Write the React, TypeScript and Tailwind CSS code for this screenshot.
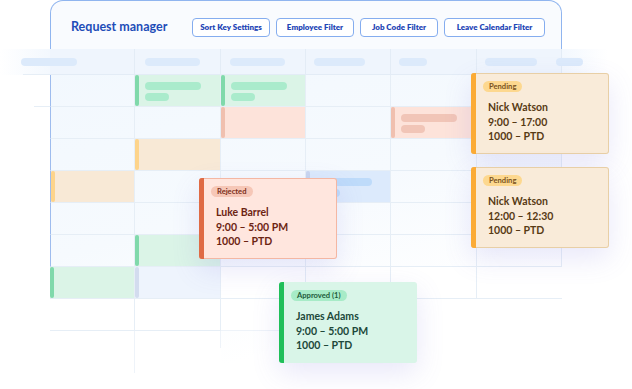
import React from "react";

type Tone = "green" | "salmon" | "beige" | "blue" | "mist";

const tones: Record<Tone, { bg: string; bar: string; pill: string }> = {
  green: { bg: "bg-[#dbf4e7]", bar: "bg-[#80d9ab]", pill: "bg-[#aaebcc]" },
  salmon: { bg: "bg-[#fde3da]", bar: "bg-[#f0c0af]", pill: "bg-[#f1c5b7]" },
  beige: { bg: "bg-[#f8e9d6]", bar: "bg-[#fdd48b]", pill: "" },
  blue: { bg: "bg-[#dceafc]", bar: "bg-[#c9d6ef]", pill: "bg-[#bedbfa]" },
  mist: { bg: "bg-[#eef4fd]", bar: "bg-[#d3dcef]", pill: "" },
};

// row-col of the coloured slots in the schedule
const slots: Record<string, { tone: Tone; pills?: boolean }> = {
  "0-1": { tone: "green", pills: true },
  "0-2": { tone: "green", pills: true },
  "1-2": { tone: "salmon" },
  "1-4": { tone: "salmon", pills: true },
  "2-1": { tone: "beige" },
  "3-0": { tone: "beige" },
  "3-3": { tone: "blue", pills: true },
  "5-1": { tone: "green" },
  "6-0": { tone: "green" },
  "6-1": { tone: "mist" },
};

const buttons = [
  "Sort Key Settings",
  "Employee Filter",
  "Job Code Filter",
  "Leave Calendar Filter",
];

function cellBorders(row: number, col: number) {
  if (row < 6) {
    return col === 0
      ? "border-b border-r border-l border-b-[#e6eef6] border-r-[#e6eef6] border-l-[#9ebcee]"
      : "border-b border-r border-[#e6eef6]";
  }
  if (row === 6) {
    return col < 5 ? "border-b border-r border-[#e6eef6]" : "border-b border-[#e6eef6]";
  }
  if (col < 2) return "border-b border-r border-[#e6eef6]";
  if (col === 2) return "border-b border-[#eef3f9]";
  return "";
}

function Slot({ tone, pills }: { tone: Tone; pills?: boolean }) {
  const t = tones[tone];
  return (
    <div className={`flex h-full w-full ${t.bg}`}>
      <div className={`w-[4px] h-full rounded-full ${t.bar}`} />
      {pills && (
        <div className="flex flex-col gap-[3px] pl-[6px] pt-[7px]">
          <div className={`h-[8px] w-[56px] rounded-full ${t.pill}`} />
          <div className={`h-[8px] w-[24px] rounded-full ${t.pill}`} />
        </div>
      )}
    </div>
  );
}

type Kind = "pending" | "rejected" | "approved";

const cardTheme: Record<Kind, { card: string; bar: string; badge: string; text: string }> = {
  pending: {
    card: "bg-[#f9ebd9] border-[#e8cfa6]",
    bar: "bg-[#fbab36]",
    badge: "bg-[#fdd88f] text-[#7a5320]",
    text: "text-[#573a14]",
  },
  rejected: {
    card: "bg-[#ffe6de] border-[#f4b7a3]",
    bar: "bg-[#df6b45]",
    badge: "bg-[#f6c7b7] text-[#7c2f1b]",
    text: "text-[#6c2412]",
  },
  approved: {
    card: "bg-[#d9f5e8] border-[#d9f5e8]",
    bar: "bg-[#1fbf59]",
    badge: "bg-[#a7ebc7] text-[#1d5a3a]",
    text: "text-[#20483a]",
  },
};

function RequestCard({
  kind,
  label,
  name,
  time,
  code,
  className,
}: {
  kind: Kind;
  label: string;
  name: string;
  time: string;
  code: string;
  className: string;
}) {
  const t = cardTheme[kind];
  return (
    <div
      className={`absolute flex w-[138px] h-[81px] rounded-[3px] border border-l-0 shadow-[0_10px_28px_rgba(115,105,215,0.16)] ${t.card} ${className}`}
    >
      <div className={`w-[5px] -my-px rounded-l-[3px] ${t.bar}`} />
      <div className="flex flex-col items-start pl-[7px] pt-[7px]">
        <span
          className={`inline-flex items-center h-[11px] px-[6px] rounded-full text-[7.6px] font-bold leading-none ${t.badge}`}
        >
          {label}
        </span>
        <div className={`mt-[8px] pl-[5px] text-[10.5px] font-bold leading-[14.5px] ${t.text}`}>
          <div>{name}</div>
          <div>{time}</div>
          <div>{code}</div>
        </div>
      </div>
    </div>
  );
}

export default function App() {
  return (
    <div className="relative w-[632px] h-[389px] overflow-hidden bg-white font-['Lato','Inter',sans-serif]">
      {/* window header */}
      <div className="ml-[50px] w-[512px] h-[49px] flex items-center pt-[4px] pl-[20px] pr-[16px] rounded-t-[13px] border border-b-0 border-[#90b5ef] bg-[#f9fbfe]">
        <h1 className="text-[12.5px] font-bold text-[#1e4db8]">Request manager</h1>
        <div className="ml-auto flex gap-[6px]">
          {buttons.map((b) => (
            <button
              key={b}
              className={`h-[19px] rounded-[4px] border border-[#85adef] bg-white text-[8px] font-extrabold text-[#1f46b6] ${
                b === "Leave Calendar Filter" ? "w-[101px]" : "w-[78px]"
              }`}
            >
              {b}
            </button>
          ))}
        </div>
      </div>

      {/* column headers */}
      <div className="flex w-[608px] h-[26px]">
        <div className="w-[50px] flex flex-col justify-end bg-gradient-to-r from-white to-[#f3f8fe]">
          <div className="ml-[23px] border-b border-[#e6eef6]" />
        </div>
        {[
          "-ml-[29px] w-[56px]",
          "ml-[10px] w-[55px]",
          "ml-[9px] w-[55px]",
          "ml-[8px] w-[51px]",
          "ml-[8px] w-[28px]",
          "ml-[8px] w-[52px]",
        ].map((p, i) => (
          <div
            key={i}
            className="w-[85.333px] flex items-center bg-[#eff5fd] border-r border-b border-[#e3ecf6]"
          >
            <div className={`h-[8px] rounded-full bg-[#dceafb] ${p}`} />
          </div>
        ))}
        <div className="flex-1 flex items-center bg-gradient-to-r from-[#f3f8fe] to-white border-b border-[#eef3f9]">
          <div className="-ml-[6px] h-[8px] w-[27px] rounded-full bg-[#dceafb]" />
        </div>
      </div>

      {/* schedule body */}
      <div className="w-[562px] grid grid-cols-[50px_repeat(6,minmax(0,1fr))] auto-rows-[32px] bg-[linear-gradient(165deg,#f2f8fe_0%,#f6fafe_45%,#ffffff_80%)]">
        {Array.from({ length: 8 }).map((_, r) => (
          <React.Fragment key={r}>
            <div className="bg-white flex flex-col justify-end">
              {r === 0 && <div className="ml-[34px] border-b border-[#e6eef6]" />}
            </div>
            {Array.from({ length: 6 }).map((__, c) => {
              const slot = slots[`${r}-${c}`];
              return (
                <div key={c} className={`${cellBorders(r, c)} ${r >= 6 && !slot ? "bg-white" : ""}`}>
                  {slot && <Slot tone={slot.tone} pills={slot.pills} />}
                </div>
              );
            })}
          </React.Fragment>
        ))}
        <div className="bg-white h-[42px]" />
        <div className="bg-white h-[42px] border-r border-[#eef3f9]" />
        <div className="bg-white h-[42px]">
          <div className="h-[17px] border-r border-[#eef3f9]" />
        </div>
      </div>

      {/* floating request cards */}
      <RequestCard
        kind="pending"
        label="Pending"
        name="Nick Watson"
        time="9:00 – 17:00"
        code="1000 – PTD"
        className="left-[471px] top-[73px]"
      />
      <RequestCard
        kind="pending"
        label="Pending"
        name="Nick Watson"
        time="12:00 – 12:30"
        code="1000 – PTD"
        className="left-[471px] top-[167px]"
      />
      <RequestCard
        kind="rejected"
        label="Rejected"
        name="Luke Barrel"
        time="9:00 – 5:00 PM"
        code="1000 – PTD"
        className="left-[199px] top-[178px]"
      />
      <RequestCard
        kind="approved"
        label="Approved (1)"
        name="James Adams"
        time="9:00 – 5:00 PM"
        code="1000 – PTD"
        className="left-[279px] top-[282px]"
      />
    </div>
  );
}
